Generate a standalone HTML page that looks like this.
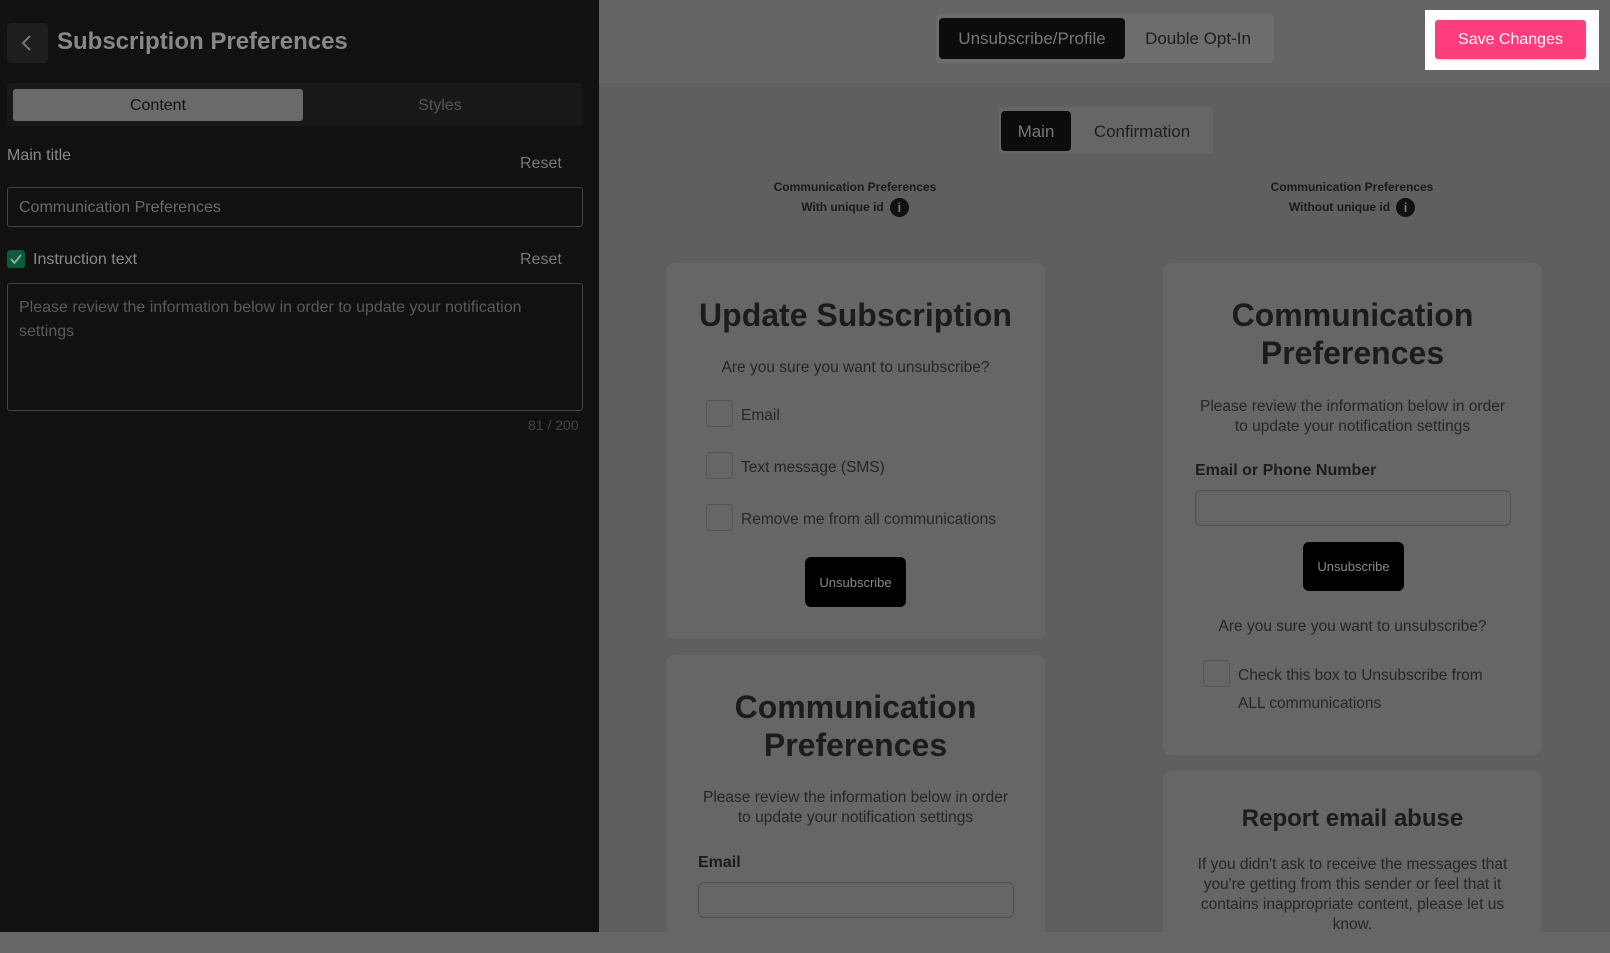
<!DOCTYPE html>
<html><head><meta charset="utf-8"><style>
*{box-sizing:border-box;margin:0;padding:0}
body{width:1610px;height:953px;overflow:hidden;background:#666;font-family:"Liberation Sans",sans-serif;position:relative}
.abs{position:absolute}
#left{left:0;top:0;width:599px;height:932px;background:#111}
#right{left:599px;top:0;width:1011px;height:932px;background:#5f5f5f}
#topbar{left:599px;top:0;width:1011px;height:83px;background:#656565}
.card{position:absolute;background:#666;border-radius:8px;color:#1c1c1c;text-align:center}
.h{font-weight:bold;font-size:32px;line-height:38px}
.p{font-size:15.5px;color:#262626}
.cb{position:absolute;width:27px;height:27px;border:1px solid #555;border-radius:4px}
.btn{position:absolute;background:#000;color:#888;border-radius:6px;font-size:13px;display:flex;align-items:center;justify-content:center}
.in{position:absolute;border:1px solid #4f4f4f;border-radius:6px}
.info{display:inline-block;width:19px;height:19px;border-radius:50%;background:#111;color:#777;font-size:13px;line-height:19px;text-align:center;font-weight:bold;vertical-align:middle;margin-left:6px}
</style></head><body>
<div id="left" class="abs"></div>
<div id="right" class="abs"></div>
<div id="topbar" class="abs"></div>

<div class="abs" style="left:7px;top:23px;width:41px;height:40px;background:#1e1e1e;border-radius:4px"></div>
<svg class="abs" style="left:20px;top:34px" width="14" height="18"><path d="M10 2 L3 9 L10 16" stroke="#777" stroke-width="2" fill="none"/></svg>
<div class="abs" style="left:57px;top:28px;font-size:24px;font-weight:bold;color:#888">Subscription Preferences</div>

<div class="abs" style="left:7px;top:83px;width:576px;height:43px;background:#181818;border-radius:4px"></div>
<div class="abs" style="left:13px;top:89px;width:290px;height:32px;background:#6a6a6a;border-radius:3px;color:#111;font-size:16px;text-align:center;line-height:33px">Content</div>
<div class="abs" style="left:303px;top:89px;width:274px;height:32px;color:#555;font-size:16px;text-align:center;line-height:33px">Styles</div>

<div class="abs" style="left:7px;top:147px;font-size:16px;color:#8a8a8a">Main title</div>
<div class="abs" style="left:520px;top:155px;font-size:16px;color:#777">Reset</div>
<div class="abs" style="left:7px;top:187px;width:576px;height:40px;border:1px solid #444;border-radius:3px;color:#6a6a6a;font-size:16px;padding:11px 11px">Communication Preferences</div>
<div class="abs" style="left:7px;top:250px;width:18px;height:18px;background:#0c5c3a;border-radius:3px"></div>
<svg class="abs" style="left:9px;top:252px" width="14" height="14"><path d="M2 7 L5.5 11 L12 3" stroke="#9aa" stroke-width="1.8" fill="none"/></svg>
<div class="abs" style="left:33px;top:251px;font-size:16px;color:#8a8a8a">Instruction text</div>
<div class="abs" style="left:520px;top:251px;font-size:16px;color:#777">Reset</div>
<div class="abs" style="left:7px;top:283px;width:576px;height:128px;border:1px solid #444;border-radius:3px;color:#5a5a5a;font-size:16px;line-height:24px;padding:12px 11px">Please review the information below in order to update your notification settings</div>
<div class="abs" style="left:528px;top:417px;font-size:14px;color:#444">81 / 200</div>

<div class="abs" style="left:936px;top:14px;width:338px;height:49px;background:#6d6d6d;border-radius:4px"></div>
<div class="abs" style="left:939px;top:18px;width:186px;height:41px;background:#0c0c0c;border-radius:4px;color:#777;font-size:17px;text-align:center;line-height:42px">Unsubscribe/Profile</div>
<div class="abs" style="left:1125px;top:18px;width:146px;height:41px;color:#1e1e1e;font-size:17px;text-align:center;line-height:42px">Double Opt-In</div>
<div class="abs" style="left:1425px;top:10px;width:174px;height:60px;background:#fff"></div>
<div class="abs" style="left:1435px;top:20px;width:151px;height:39px;background:#ff3d7c;border-radius:3px;color:#fff;font-size:16px;text-align:center;line-height:40px">Save Changes</div>

<div class="abs" style="left:999px;top:107px;width:214px;height:47px;background:#666;border-radius:4px"></div>
<div class="abs" style="left:1001px;top:111px;width:70px;height:40px;background:#0c0c0c;border-radius:4px;color:#777;font-size:17px;text-align:center;line-height:41px">Main</div>
<div class="abs" style="left:1071px;top:111px;width:142px;height:40px;color:#1e1e1e;font-size:17px;text-align:center;line-height:41px">Confirmation</div>

<div class="abs" style="left:755px;top:177px;width:200px;text-align:center;font-size:12px;font-weight:bold;color:#1a1a1a;line-height:20px">Communication Preferences<br>With unique id<span class="info">i</span></div>
<div class="abs" style="left:1252px;top:177px;width:200px;text-align:center;font-size:12px;font-weight:bold;color:#1a1a1a;line-height:20px">Communication Preferences<br>Without unique id<span class="info">i</span></div>

<div class="card" style="left:666px;top:263px;width:379px;height:376px">
 <div class="h" style="margin-top:33px">Update Subscription</div>
 <div class="p" style="margin-top:25px">Are you sure you want to unsubscribe?</div>
 <div class="cb" style="left:40px;top:137px"></div><div class="p abs" style="left:75px;top:144px">Email</div>
 <div class="cb" style="left:40px;top:189px"></div><div class="p abs" style="left:75px;top:196px">Text message (SMS)</div>
 <div class="cb" style="left:40px;top:241px"></div><div class="p abs" style="left:75px;top:248px">Remove me from all communications</div>
 <div class="btn" style="left:139px;top:294px;width:101px;height:50px">Unsubscribe</div>
</div>
<div class="card" style="left:666px;top:655px;width:379px;height:277px;border-radius:8px 8px 0 0">
 <div class="h" style="margin-top:33px">Communication<br>Preferences</div>
 <div class="p" style="margin-top:24px;line-height:20px">Please review the information below in order<br>to update your notification settings</div>
 <div class="abs" style="left:32px;top:199px;font-weight:bold;font-size:16px">Email</div>
 <div class="in" style="left:32px;top:227px;width:316px;height:36px"></div>
</div>

<div class="card" style="left:1163px;top:263px;width:379px;height:492px">
 <div class="h" style="margin-top:33px">Communication<br>Preferences</div>
 <div class="p" style="margin-top:25px;line-height:20px">Please review the information below in order<br>to update your notification settings</div>
 <div class="abs" style="left:32px;top:199px;font-weight:bold;font-size:16px">Email or Phone Number</div>
 <div class="in" style="left:32px;top:227px;width:316px;height:36px"></div>
 <div class="btn" style="left:140px;top:279px;width:101px;height:49px">Unsubscribe</div>
 <div class="p abs" style="left:0;width:379px;top:355px">Are you sure you want to unsubscribe?</div>
 <div class="cb" style="left:40px;top:397px"></div>
 <div class="p abs" style="left:75px;top:399px;text-align:left;line-height:28px">Check this box to Unsubscribe from<br>ALL communications</div>
</div>
<div class="card" style="left:1163px;top:771px;width:379px;height:161px;border-radius:8px 8px 0 0">
 <div style="margin-top:34px;font-weight:bold;font-size:24px">Report email abuse</div>
 <div class="p" style="margin-top:22px;line-height:20px">If you didn't ask to receive the messages that<br>you're getting from this sender or feel that it<br>contains inappropriate content, please let us<br>know.</div>
</div>
</body></html>
